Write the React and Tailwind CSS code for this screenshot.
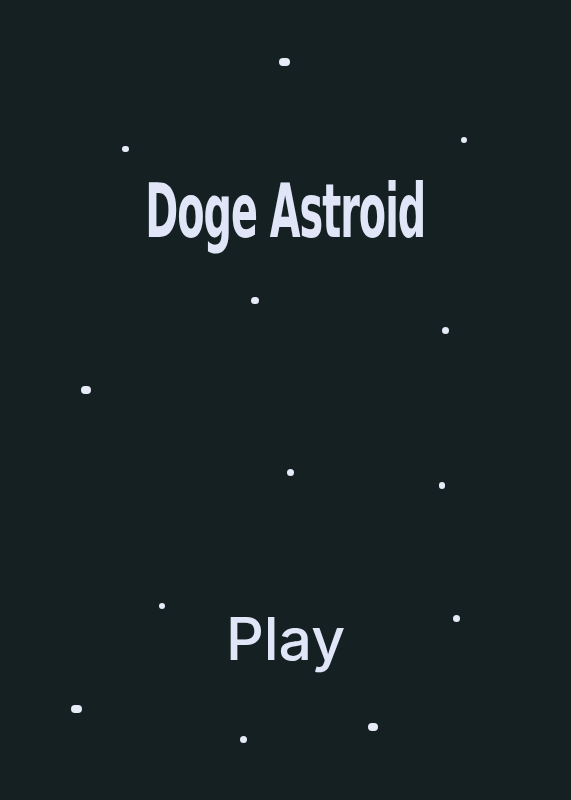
// Start screen: starfield backdrop, title and a play button
const stars = [
  { x: 284, y: 62, w: 11, h: 8 },
  { x: 125, y: 149, w: 7, h: 6 },
  { x: 464, y: 140, w: 6, h: 6 },
  { x: 255, y: 300, w: 8, h: 7 },
  { x: 445, y: 330, w: 7, h: 7 },
  { x: 86, y: 390, w: 10, h: 8 },
  { x: 290, y: 472, w: 7, h: 7 },
  { x: 442, y: 485, w: 6, h: 7 },
  { x: 162, y: 606, w: 6, h: 6 },
  { x: 456, y: 618, w: 7, h: 7 },
  { x: 76, y: 709, w: 11, h: 8 },
  { x: 373, y: 727, w: 10, h: 8 },
  { x: 243, y: 739, w: 7, h: 7 },
];

export default function App() {
  return (
    <div className="relative w-full h-[800px] bg-[#152022] overflow-hidden flex flex-col items-center">
      {stars.map((s, i) => (
        <span
          key={i}
          className="absolute rounded-full bg-[#e6ebf7]"
          style={{ left: s.x - s.w / 2, top: s.y - s.h / 2, width: s.w, height: s.h }}
        />
      ))}

      {/* condensed display title */}
      <h1 className="relative mt-[174px] text-[#e0e6f8] text-[75px] leading-none font-bold tracking-tight whitespace-nowrap scale-x-[0.53] font-['DejaVu_Sans',sans-serif]">
        Doge Astroid
      </h1>

      <button className="relative mt-auto mb-[132px] text-[#e0e6f8] text-[59px] leading-none font-medium font-['Inter',sans-serif]">
        Play
      </button>
    </div>
  );
}
